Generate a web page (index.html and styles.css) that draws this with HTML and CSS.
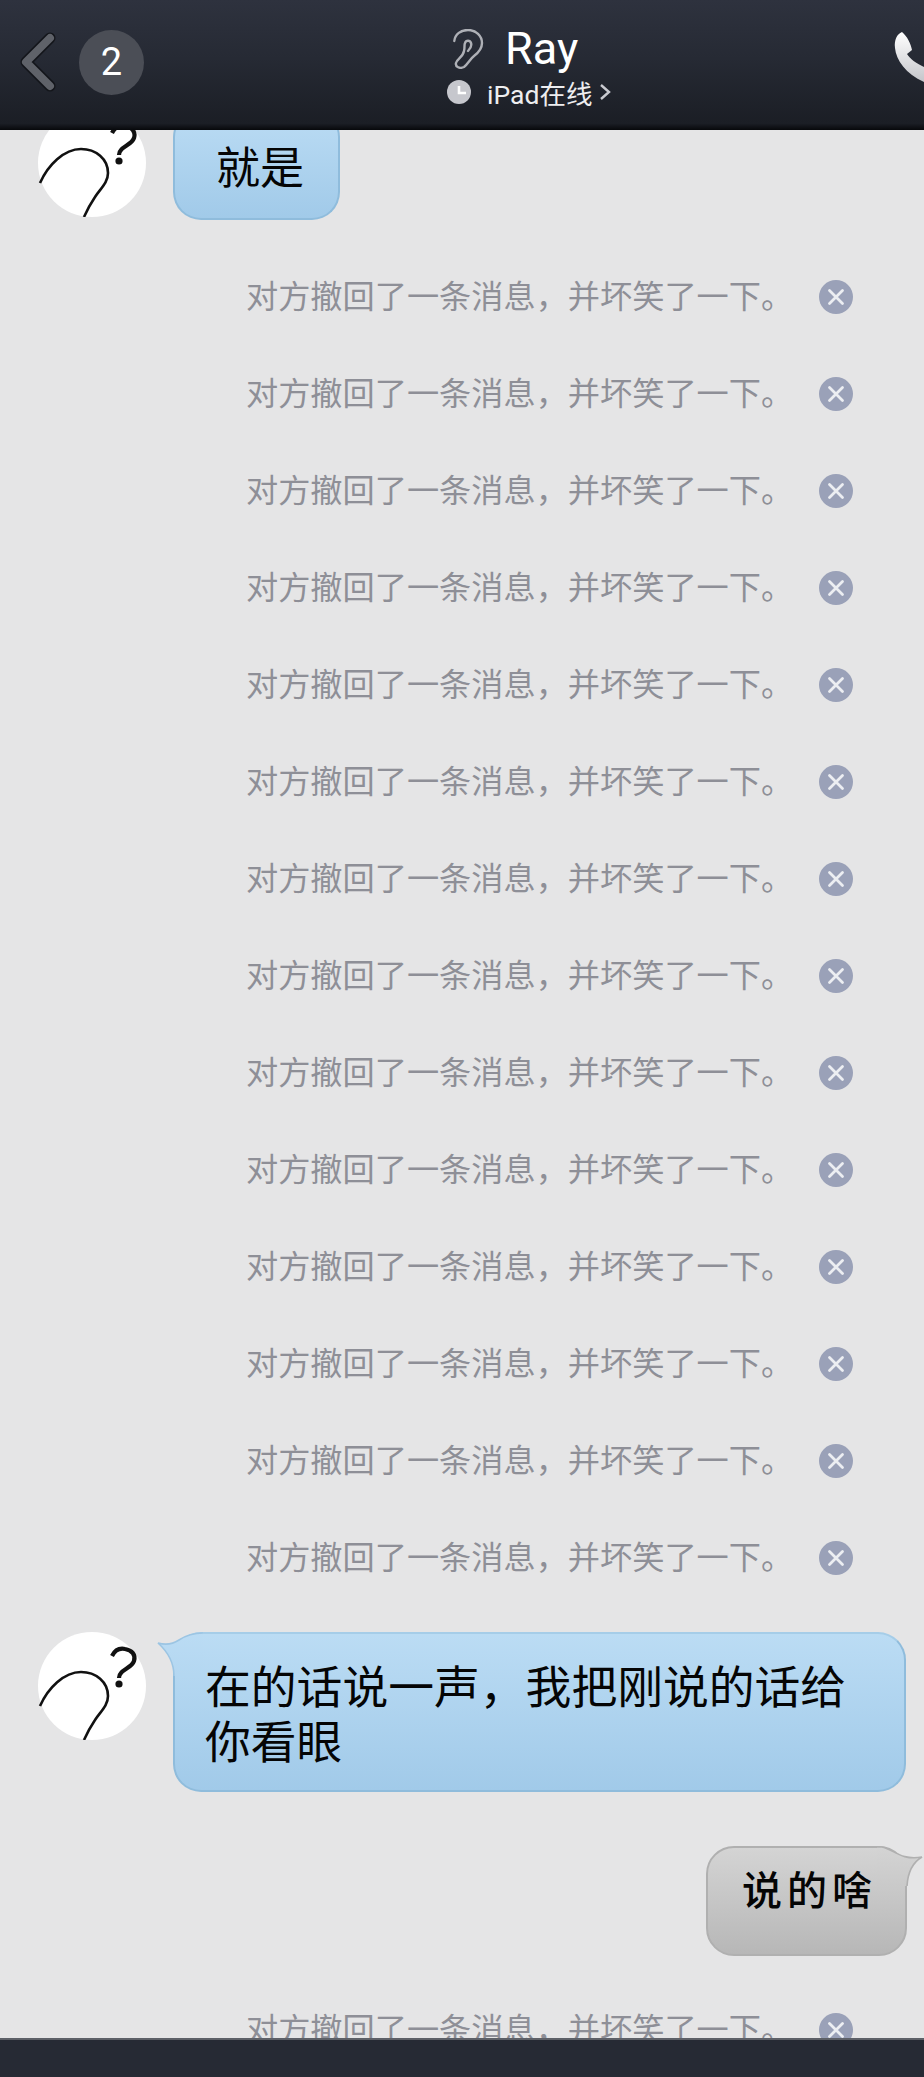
FILE: index.html

```html
<!DOCTYPE html>
<html lang="zh-CN">
<head>
    <meta charset="UTF-8">
    <meta name="viewport" content="width=device-width, initial-scale=1.0">
    <title>Ray</title>
    <link rel="stylesheet" href="styles.css">
</head>
<body>

    <svg class="defs" width="0" height="0">
        <defs>
            <symbol id="avatar" viewBox="0 0 108 108">
                <circle cx="54" cy="54" r="54" fill="#fff"/>
                <path d="M2 74C10 56 26 40 43 40C58 40 70 50 70 64C70 74 62 80 57 88C53 94 49 101 46 108" fill="none" stroke="#111" stroke-width="2.6"/>
                <path d="M74 24C77 18 82 16 87 17C94 18 98 23 96 29C94 35 86 37 83 41C81 43 81 45 81 46" fill="none" stroke="#111" stroke-width="4.2"/>
                <circle cx="81" cy="52" r="3.6" fill="#111"/>
            </symbol>
            <symbol id="close" viewBox="0 0 34 34">
                <circle cx="17" cy="17" r="17" fill="#9aa1b8"/>
                <path d="M10.5 10.5L23.5 23.5M23.5 10.5L10.5 23.5" stroke="#eceef2" stroke-width="2.8" stroke-linecap="round"/>
            </symbol>
            <linearGradient id="blue-fill" gradientUnits="userSpaceOnUse" x1="0" y1="0" x2="0" y2="160">
                <stop offset="0" stop-color="#bbdcf4"/>
                <stop offset="1" stop-color="#a1cae9"/>
            </linearGradient>
            <linearGradient id="grey-fill" gradientUnits="userSpaceOnUse" x1="0" y1="0" x2="0" y2="110">
                <stop offset="0" stop-color="#d4d4d4"/>
                <stop offset="1" stop-color="#b7b7b7"/>
            </linearGradient>
            <linearGradient id="phone-fill" x1="0" y1="0" x2="0" y2="1">
                <stop offset="0" stop-color="#fff"/>
                <stop offset="1" stop-color="#c4c5ca"/>
            </linearGradient>
        </defs>
    </svg>

    <header class="topbar">
        <svg class="back" width="38" height="60" viewBox="0 0 38 60">
            <path d="M32 6L8 30L32 54" fill="none" stroke="#14161b" stroke-width="11" stroke-linecap="round" stroke-linejoin="round"/>
            <path d="M32 6L8 30L32 54" fill="none" stroke="#5f6269" stroke-width="8" stroke-linecap="round" stroke-linejoin="round"/>
        </svg>
        <div class="badge">2</div>
        <div class="title">
            <div class="title-row">
                <svg class="ear" width="32" height="40" viewBox="0 0 32 40">
                    <path d="M2.3 12C3 5 9 1 16 1C24 1 30 7 30 14C30 20 26 24 22 27C18 30 16 35 12 38C8 40 3 38 4 34C5 30 11 28 12 22C13 18 12 16 13 14C14 11 18 11 19 14C20 17 18 20 16 22" fill="none" stroke="#aeb0b6" stroke-width="2.4" stroke-linecap="round"/>
                </svg>
                <span class="name">Ray</span>
            </div>
            <div class="status">
                <svg class="clock" width="24" height="24" viewBox="0 0 24 24">
                    <circle cx="12" cy="12" r="12" fill="#c6c7cd"/>
                    <path d="M12 6V13H19" fill="none" stroke="#fff" stroke-width="2.6"/>
                </svg>
                <span class="device">iPad在线</span>
                <svg class="more" width="12" height="18" viewBox="0 0 12 18">
                    <path d="M2 2L10 9L2 16" fill="none" stroke="#c9cad0" stroke-width="2.4"/>
                </svg>
            </div>
        </div>
        <svg class="phone" width="30" height="58" viewBox="0 0 30 58">
            <path d="M8 2C3 4 0 10 1 18C2 30 12 44 30 52V37C22 33 16 29 13 24L18 20C17 14 13 6 8 2Z" fill="url(#phone-fill)"/>
        </svg>
    </header>

    <main class="chat">
        <div class="msg msg-first">
            <svg class="avatar"><use href="#avatar"/></svg>
            <div class="bubble bubble-short">就是</div>
        </div>

        <div class="notice"><span>对方撤回了一条消息，并坏笑了一下。</span><svg class="close"><use href="#close"/></svg></div>
        <div class="notice"><span>对方撤回了一条消息，并坏笑了一下。</span><svg class="close"><use href="#close"/></svg></div>
        <div class="notice"><span>对方撤回了一条消息，并坏笑了一下。</span><svg class="close"><use href="#close"/></svg></div>
        <div class="notice"><span>对方撤回了一条消息，并坏笑了一下。</span><svg class="close"><use href="#close"/></svg></div>
        <div class="notice"><span>对方撤回了一条消息，并坏笑了一下。</span><svg class="close"><use href="#close"/></svg></div>
        <div class="notice"><span>对方撤回了一条消息，并坏笑了一下。</span><svg class="close"><use href="#close"/></svg></div>
        <div class="notice"><span>对方撤回了一条消息，并坏笑了一下。</span><svg class="close"><use href="#close"/></svg></div>
        <div class="notice"><span>对方撤回了一条消息，并坏笑了一下。</span><svg class="close"><use href="#close"/></svg></div>
        <div class="notice"><span>对方撤回了一条消息，并坏笑了一下。</span><svg class="close"><use href="#close"/></svg></div>
        <div class="notice"><span>对方撤回了一条消息，并坏笑了一下。</span><svg class="close"><use href="#close"/></svg></div>
        <div class="notice"><span>对方撤回了一条消息，并坏笑了一下。</span><svg class="close"><use href="#close"/></svg></div>
        <div class="notice"><span>对方撤回了一条消息，并坏笑了一下。</span><svg class="close"><use href="#close"/></svg></div>
        <div class="notice"><span>对方撤回了一条消息，并坏笑了一下。</span><svg class="close"><use href="#close"/></svg></div>
        <div class="notice"><span>对方撤回了一条消息，并坏笑了一下。</span><svg class="close"><use href="#close"/></svg></div>

        <div class="msg msg-long">
            <svg class="avatar"><use href="#avatar"/></svg>
            <div class="bubble bubble-long">
                <svg class="tail tail-left" width="46" height="44" viewBox="0 0 46 44">
                    <path d="M1 11C8 13 16 12 22 8C28 4 34 1 46 1V44H17C17 30 11 20 1 11Z" fill="url(#blue-fill)"/>
                    <path d="M17 44C17 30 11 20 1 11C8 13 16 12 22 8C28 4 34 1 46 1" fill="none" stroke="#9cc5e3" stroke-width="1.6"/>
                </svg>
                <span class="bubble-text">在的话说一声，我把刚说的话给<br>你看眼</span>
            </div>
        </div>

        <div class="msg msg-mine">
            <div class="bubble bubble-mine">
                <svg class="tail tail-right" width="46" height="40" viewBox="0 0 46 40">
                    <path d="M0 1H5C16 3 24 15 45 11C38 15 31 24 30 40H0Z" fill="url(#grey-fill)"/>
                    <path d="M0 1H5C16 3 24 15 45 11C38 15 31 24 30 40" fill="none" stroke="#b0b0b0" stroke-width="1.6"/>
                </svg>
                <span class="bubble-text">说的啥</span>
            </div>
        </div>

        <div class="notice notice-last"><span>对方撤回了一条消息，并坏笑了一下。</span><svg class="close"><use href="#close"/></svg></div>
    </main>

    <footer class="bottombar"></footer>

</body>
</html>
```

FILE: styles.css

```css
* {
    box-sizing: border-box;
}
html, body {
    margin: 0;
    padding: 0;
}
body {
    width: 924px;
    height: 2077px;
    display: flex;
    flex-direction: column;
    overflow: hidden;
    background: #e5e5e6;
    font-family: Roboto, "Noto Sans CJK SC", sans-serif;
}
.defs {
    position: absolute;
}

/* top bar */
.topbar {
    position: relative;
    z-index: 2;
    flex: 0 0 130px;
    display: flex;
    align-items: center;
    padding: 0 0 6px 18px;
    background: linear-gradient(#2e323e 0%, #262a34 45%, #1b1e25 95%, #07080b 100%);
}
.back {
    flex: none;
}
.badge {
    flex: none;
    width: 65px;
    height: 65px;
    margin-left: 23px;
    border-radius: 50%;
    background: #4b4e56;
    color: #fff;
    font-size: 38px;
    line-height: 65px;
    text-align: center;
}
.title {
    flex: none;
    width: 180px;
    margin-left: 303px;
    color: #fff;
}
.title-row {
    display: flex;
    align-items: center;
    height: 50px;
    margin-top: 10px;
}
.ear {
    flex: none;
    margin-left: 5px;
}
.name {
    margin-left: 21px;
    font-size: 45px;
    line-height: 50px;
}
.status {
    display: flex;
    align-items: center;
    height: 36px;
}
.clock {
    flex: none;
}
.device {
    margin-left: 16px;
    font-size: 26.5px;
    color: #eeeef0;
}
.more {
    flex: none;
    margin-left: 7px;
}
.phone {
    flex: none;
    margin-left: auto;
    margin-top: -6px;
}

/* messages */
.chat {
    flex: 1;
    min-height: 0;
    overflow: hidden;
}
.msg {
    display: flex;
    align-items: flex-start;
}
.msg-first {
    height: 111px;
    margin-top: -21px;
    padding-left: 38px;
    margin-bottom: 28px;
}
.msg-long {
    padding-left: 38px;
    margin-top: 26px;
}
.msg-mine {
    justify-content: flex-end;
    padding-right: 17px;
    margin-top: 54px;
}
.avatar {
    flex: none;
    width: 108px;
    height: 108px;
}
.bubble {
    position: relative;
    flex: none;
    margin-left: 27px;
    color: #050505;
    border-radius: 28px;
}
.bubble-text {
    position: relative;
}
.bubble-short, .bubble-long {
    background: linear-gradient(#bbdcf4, #a1cae9);
    border: 2px solid #8fbcdc;
    border-top-color: #a6cde8;
}
.bubble-short {
    width: 167px;
    height: 111px;
    padding: 28px 0 0 41px;
    font-size: 44px;
    line-height: 60px;
}
.bubble-long {
    width: 733px;
    height: 160px;
    padding: 27px 0 0 30px;
    font-size: 45.8px;
    line-height: 55px;
}
.bubble-mine {
    width: 201px;
    height: 110px;
    padding: 19px 0 0 34px;
    background: linear-gradient(#d4d4d4, #b7b7b7);
    border: 2px solid #b0b0b0;
    font-size: 40px;
    line-height: 50px;
    letter-spacing: 5px;
    font-weight: 500;
}
.tail {
    position: absolute;
}
.tail-left {
    left: -18px;
    top: -2px;
}
.tail-right {
    right: -18px;
    top: -2px;
}

/* recalled message rows */
.notice {
    display: flex;
    align-items: center;
    height: 97px;
    padding-left: 246px;
    color: #8e8f97;
    font-size: 32.2px;
    line-height: 40px;
}
.notice span {
    flex: none;
    width: 573px;
    white-space: nowrap;
}
.close {
    flex: none;
    width: 34px;
    height: 34px;
}
.notice-last {
    margin-top: 25px;
}

/* bottom bar */
.bottombar {
    position: relative;
    z-index: 2;
    flex: 0 0 39px;
    background: #262a34;
    border-top: 2px solid #5d6067;
}
```
